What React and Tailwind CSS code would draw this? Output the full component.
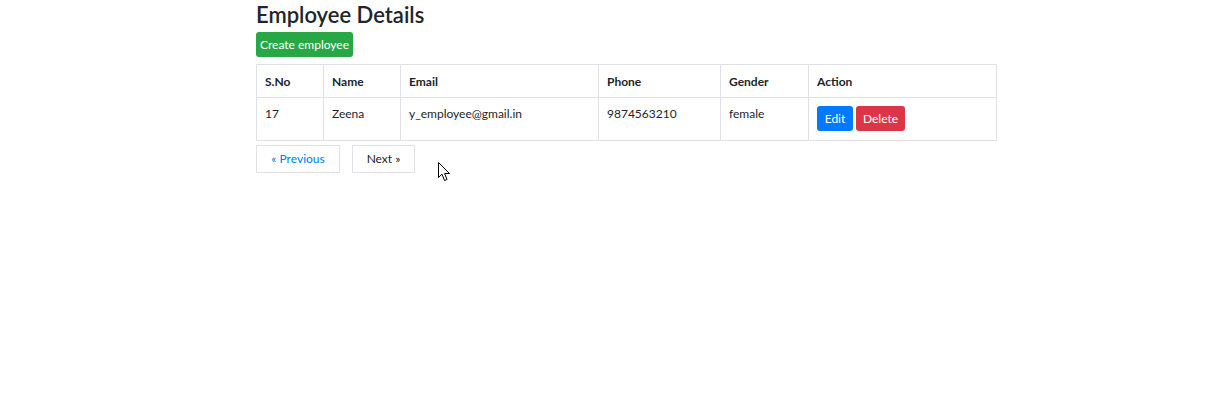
import React from 'react'

const employees = [
  { id: 17, name: 'Zeena', email: 'y_employee@gmail.in', phone: '9874563210', gender: 'female' },
]

export default function App() {
  return (
    <div className="relative min-h-[413px] bg-white text-[#212529]" style={{ fontFamily: 'Lato, "Noto Sans", sans-serif' }}>
      <div className="ml-[256px] w-[740px]">
        <h2 className="pt-[1px] text-[22px] font-semibold leading-[28px]">Employee Details</h2>
        <button className="mt-[3px] h-[25px] w-[97px] rounded-[3px] bg-[#28a745] text-[12px] text-white">
          Create employee
        </button>

        <table className="mt-[7px] w-[740px] table-fixed border-collapse text-[12px]">
          <colgroup>
            <col className="w-[67px]" />
            <col className="w-[77px]" />
            <col className="w-[198px]" />
            <col className="w-[122px]" />
            <col className="w-[88px]" />
            <col className="w-[188px]" />
          </colgroup>
          <thead>
            <tr className="h-[33px]">
              {['S.No', 'Name', 'Email', 'Phone', 'Gender', 'Action'].map(h => (
                <th key={h} className="border border-[#dee2e6] px-[8px] pt-[2px] text-left align-middle font-bold">
                  {h}
                </th>
              ))}
            </tr>
          </thead>
          <tbody>
            {employees.map(e => (
              <tr key={e.id} className="h-[43px]">
                <td className="border border-[#dee2e6] px-[8px] pt-[7px] align-top">{e.id}</td>
                <td className="border border-[#dee2e6] px-[8px] pt-[7px] align-top">{e.name}</td>
                <td className="border border-[#dee2e6] px-[8px] pt-[7px] align-top">{e.email}</td>
                <td className="border border-[#dee2e6] px-[8px] pt-[7px] align-top">{e.phone}</td>
                <td className="border border-[#dee2e6] px-[8px] pt-[7px] align-top">{e.gender}</td>
                <td className="border border-[#dee2e6] px-[8px] pt-[8px] align-top">
                  <div className="flex gap-[3px]">
                    <button className="h-[25px] w-[36px] rounded-[3px] bg-[#007bff] text-[12px] text-white">Edit</button>
                    <button className="h-[25px] w-[49px] rounded-[3px] bg-[#dc3545] text-[12px] text-white">Delete</button>
                  </div>
                </td>
              </tr>
            ))}
          </tbody>
        </table>

        <div className="mt-[4px] flex gap-[12px]">
          <button className="h-[28px] w-[84px] border border-[#dee2e6] bg-white text-[12px] text-[#007bff]">« Previous</button>
          <button className="h-[28px] w-[63px] border border-[#dee2e6] bg-white text-[12px] text-[#212529]">Next »</button>
        </div>
      </div>

      {/* mouse pointer */}
      <svg className="absolute left-[438px] top-[162px]" width="13" height="20" viewBox="0 0 13 20">
        <path d="M0.5 0.5 L0.5 15.5 L4 12.2 L6.5 18.5 L9 17.5 L6.6 11.5 L11.5 11.5 Z" fill="white" stroke="black" strokeWidth="1" strokeLinejoin="miter" />
      </svg>
    </div>
  )
}
